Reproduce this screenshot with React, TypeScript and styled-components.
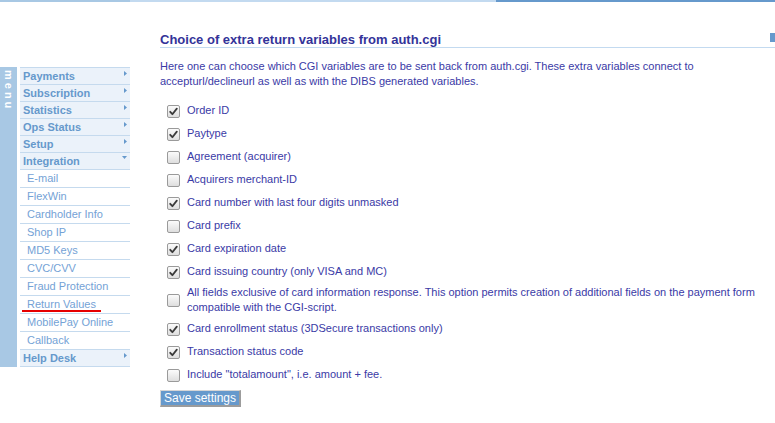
import React from "react";
import styled, { createGlobalStyle } from "styled-components";

const GlobalStyle = createGlobalStyle`
  html, body { margin: 0; padding: 0; background: #ffffff; }
  body { font-family: "Liberation Sans", Arial, sans-serif; }
  * { box-sizing: border-box; }
`;

const TopBar = styled.div`
  display: flex;
  height: 2px;
`;

const BarSeg = styled.div<{ $w?: number; $c: string }>`
  background: ${(p) => p.$c};
  ${(p) => (p.$w ? `width: ${p.$w}px; flex: none;` : "flex: 1;")}
`;

const Layout = styled.div`
  display: flex;
  align-items: flex-start;
`;

const Sidebar = styled.nav`
  display: flex;
  flex: none;
  width: 130px;
  margin-top: 65px;
`;

const MenuTab = styled.div`
  width: 17px;
  flex: none;
  background: #a8c8e4;
  color: #ffffff;
  font-weight: bold;
  font-size: 11px;
  writing-mode: vertical-rl;
  text-orientation: sideways;
  letter-spacing: 3px;
  line-height: 17px;
  padding-top: 3px;
`;

const MenuList = styled.ul`
  list-style: none;
  margin: 0 0 0 3px;
  padding: 0;
  width: 110px;
  border-top: 1px solid #c5daee;
`;

const MainItem = styled.li`
  display: flex;
  justify-content: space-between;
  align-items: flex-start;
  height: 17px;
  padding-left: 3px;
  background: #ebf2fa;
  border-bottom: 1px solid #c5daee;
  color: #6699cc;
  font-weight: bold;
  font-size: 11px;
  line-height: 16px;
`;

const SubItem = styled.li<{ $marked?: boolean }>`
  position: relative;
  height: 18px;
  padding-left: 7px;
  background: #ffffff;
  border-bottom: 1px solid #c5daee;
  color: #74a2d6;
  font-size: 11px;
  line-height: 17px;
  ${(p) =>
    p.$marked &&
    `
    &::after {
      content: "";
      position: absolute;
      left: 2px;
      bottom: 1px;
      width: 79px;
      height: 2px;
      background: #e60000;
    }
  `}
`;

const Arrow = styled.svg`
  flex: none;
  margin-top: 3px;
  margin-right: 3px;
`;

const Main = styled.main`
  flex: 1;
  margin-left: 30px;
  padding-top: 30px;
`;

const HeadRow = styled.div`
  display: flex;
  justify-content: space-between;
  align-items: flex-start;
  border-bottom: 1px solid #c3daf0;
`;

const Heading = styled.h1`
  margin: 0;
  font-size: 13px;
  line-height: 15px;
  font-weight: bold;
  color: #333399;
`;

const Marker = styled.span`
  width: 5px;
  height: 9px;
  margin-top: 1px;
  background: #6699cc;
`;

const Intro = styled.p`
  margin: 11px 0 10px;
  font-size: 11px;
  line-height: 15px;
  color: #3a3aa6;
  max-width: 560px;
`;

const Options = styled.div`
  display: flex;
  flex-direction: column;
`;

const OptionRow = styled.label`
  display: flex;
  align-items: center;
  min-height: 23px;
  padding: 2px 8px 2px 0;
  cursor: pointer;
`;

const Box = styled.span`
  flex: none;
  width: 13px;
  height: 13px;
  margin: 1px 7px 0 7px;
  border: 1px solid #9a9a9a;
  border-radius: 2px;
  background: linear-gradient(#fbfbfb, #dedede);
  display: flex;
  align-items: center;
  justify-content: center;
`;

const OptionText = styled.span`
  font-size: 11px;
  line-height: 15px;
  color: #3a3aa6;
`;

const SaveButton = styled.button`
  margin-top: 4px;
  height: 17px;
  padding: 0 3px;
  background: #6699cc;
  color: #ffffff;
  font-family: "Liberation Sans", Arial, sans-serif;
  font-size: 12px;
  line-height: 14px;
  border-style: solid;
  border-width: 1px 2px 2px 1px;
  border-color: #d6d6d6 #9c9c9c #9c9c9c #d6d6d6;
  cursor: pointer;
`;

const RightArrow = () => (
  <Arrow width="3" height="5" viewBox="0 0 3 5">
    <polygon points="0,0 3,2.5 0,5" fill="#6699cc" />
  </Arrow>
);

const DownArrow = () => (
  <Arrow width="5" height="3" viewBox="0 0 5 3">
    <polygon points="0,0 5,0 2.5,3" fill="#6699cc" />
  </Arrow>
);

const Check = () => (
  <svg width="9" height="9" viewBox="0 0 9 9">
    <path
      d="M1.2 4.8 L3.4 7.2 L7.8 1.6"
      fill="none"
      stroke="#3a3a3a"
      strokeWidth="1.8"
      strokeLinecap="round"
      strokeLinejoin="round"
    />
  </svg>
);

const mainBefore = ["Payments", "Subscription", "Statistics", "Ops Status", "Setup"];
const subItems = [
  "E-mail",
  "FlexWin",
  "Cardholder Info",
  "Shop IP",
  "MD5 Keys",
  "CVC/CVV",
  "Fraud Protection",
  "Return Values",
  "MobilePay Online",
  "Callback",
];

const options: { label: string; checked: boolean }[] = [
  { label: "Order ID", checked: true },
  { label: "Paytype", checked: true },
  { label: "Agreement (acquirer)", checked: false },
  { label: "Acquirers merchant-ID", checked: false },
  { label: "Card number with last four digits unmasked", checked: true },
  { label: "Card prefix", checked: false },
  { label: "Card expiration date", checked: true },
  { label: "Card issuing country (only VISA and MC)", checked: true },
  {
    label:
      "All fields exclusive of card information response. This option permits creation of additional fields on the payment form compatible with the CGI-script.",
    checked: false,
  },
  { label: "Card enrollment status (3DSecure transactions only)", checked: true },
  { label: "Transaction status code", checked: true },
  { label: 'Include "totalamount", i.e. amount + fee.', checked: false },
];

export default function App() {
  return (
    <>
      <GlobalStyle />
      <TopBar>
        <BarSeg $w={130} $c="#a8c8e4" />
        <BarSeg $c="#c3daf0" />
        <BarSeg $w={279} $c="#6699cc" />
      </TopBar>
      <Layout>
        <Sidebar>
          <MenuTab>menu</MenuTab>
          <MenuList>
            {mainBefore.map((m) => (
              <MainItem key={m}>
                <span>{m}</span>
                <RightArrow />
              </MainItem>
            ))}
            <MainItem>
              <span>Integration</span>
              <DownArrow />
            </MainItem>
            {subItems.map((s) => (
              <SubItem key={s} $marked={s === "Return Values"}>
                {s}
              </SubItem>
            ))}
            <MainItem>
              <span>Help Desk</span>
              <RightArrow />
            </MainItem>
          </MenuList>
        </Sidebar>
        <Main>
          <HeadRow>
            <Heading>Choice of extra return variables from auth.cgi</Heading>
            <Marker />
          </HeadRow>
          <Intro>
            Here one can choose which CGI variables are to be sent back from auth.cgi. These extra
            variables connect to accepturl/declineurl as well as with the DIBS generated variables.
          </Intro>
          <Options>
            {options.map((o) => (
              <OptionRow key={o.label}>
                <Box>{o.checked && <Check />}</Box>
                <OptionText>{o.label}</OptionText>
              </OptionRow>
            ))}
          </Options>
          <SaveButton type="button">Save settings</SaveButton>
        </Main>
      </Layout>
    </>
  );
}
